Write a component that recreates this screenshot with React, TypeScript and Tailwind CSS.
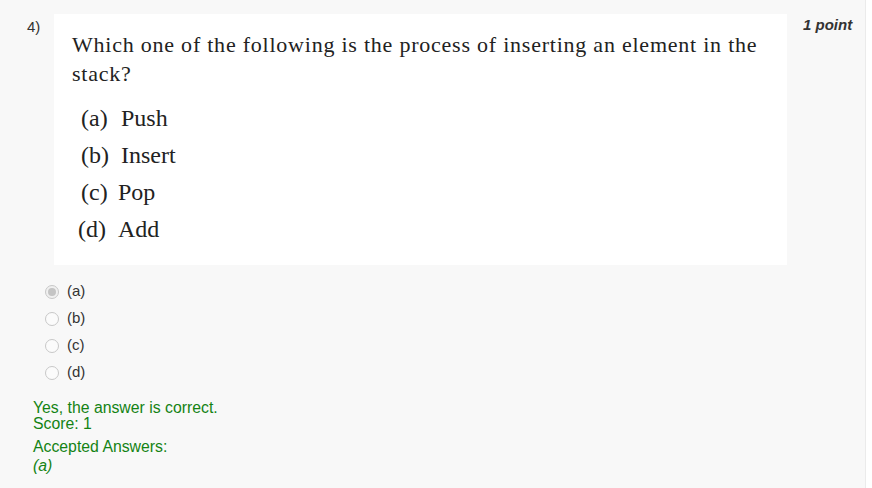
import React from "react";

const opts = [
  { k: "(a)", t: "Push", ml: "ml-[9px]", w: "w-[40px]" },
  { k: "(b)", t: "Insert", ml: "ml-[9px]", w: "w-[40px]" },
  { k: "(c)", t: "Pop", ml: "ml-[9px]", w: "w-[37px]" },
  { k: "(d)", t: "Add", ml: "ml-[6px]", w: "w-[40px]" },
];

function Radio({ checked }: { checked?: boolean }) {
  return (
    <span
      className={
        "inline-flex items-center justify-center w-[14px] h-[14px] rounded-full border " +
        (checked ? "border-[#c8c8c8] bg-[#f0f0f0]" : "border-[#c8c8c8] bg-[#fbfbfb]")
      }
    >
      {checked && <span className="w-[8px] h-[8px] rounded-full bg-[#c4c4c4]" />}
    </span>
  );
}

export default function App() {
  return (
    <div className="w-[872px] h-[488px] flex bg-white overflow-hidden" style={{ fontFamily: "Arial, 'Liberation Sans', sans-serif" }}>
      <div className="w-[866px] h-full bg-[#f8f8f8] border-r border-[#ebebeb] relative">
        <div className="flex pt-[14px]">
          <div className="w-[54px] pl-[27px] pt-[4px] text-[15px] text-[#333] leading-[18px]">4)</div>
          <div className="w-[733px] h-[251px] bg-white pl-[18px] pt-[16px]" style={{ fontFamily: "'Liberation Serif', 'DejaVu Serif', serif" }}>
            <div className="text-[22px] leading-[29px] text-[#222] tracking-[0.77px]">
              Which one of the following is the process of inserting an element in the
              <br />
              stack?
            </div>
            <div className="mt-[16px] flex flex-col gap-[8px]">
              {opts.map((o) => (
                <div key={o.k} className={"flex text-[24px] leading-[29px] text-[#222] " + o.ml}>
                  <span className={o.w}>{o.k}</span>
                  <span>{o.t}</span>
                </div>
              ))}
            </div>
          </div>
          <div className="flex-1 pl-[16px] pt-[2px] text-[15px] font-bold italic text-[#333] leading-[18px]">1 point</div>
        </div>
        <div className="mt-[17px] ml-[45px] flex flex-col gap-[8px]">
          {["(a)", "(b)", "(c)", "(d)"].map((l, i) => (
            <div key={l} className="flex items-center h-[19px] gap-[8px] text-[15px] text-[#333]">
              <Radio checked={i === 0} />
              <span>{l}</span>
            </div>
          ))}
        </div>
        <div className="mt-[18px] ml-[33px] text-[15.8px] leading-[16px] text-[#148314]">
          <div>Yes, the answer is correct.</div>
          <div>Score: 1</div>
          <div className="mt-[7px]">Accepted Answers:</div>
          <div className="italic mt-[3px]">(a)</div>
        </div>
      </div>
      <div className="flex-1 bg-white" />
    </div>
  );
}
